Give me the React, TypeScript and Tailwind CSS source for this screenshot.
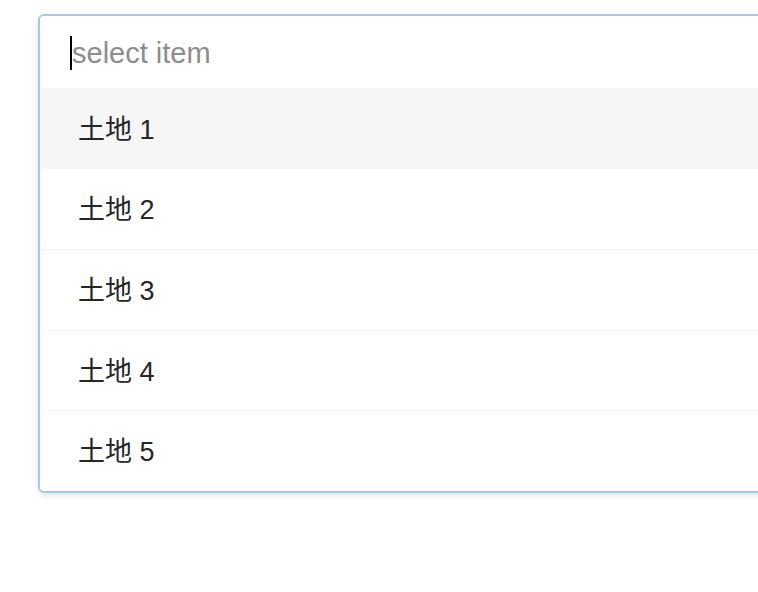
const items = ["土地 1", "土地 2", "土地 3", "土地 4", "土地 5"];

export default function App() {
  return (
    <div
      className="w-[758px] h-[592px] overflow-hidden bg-white pt-[14px] pl-[38px]"
      style={{ fontFamily: '"Liberation Sans", "Noto Sans CJK SC", sans-serif' }}
    >
      <div className="w-[760px] rounded-[6px] border-2 border-[#a5c9dc] bg-white shadow-[0_2px_6px_rgba(0,0,0,0.12)] overflow-hidden">
        <div className="h-[72px] flex items-center pl-[30px] pt-[2px]">
          <span className="w-[2px] h-[34px] bg-black" />
          <span className="text-[29px] text-[#8c8c8c] leading-none">select item</span>
        </div>
        {items.map((item, i) => (
          <div
            key={item}
            className={`h-[80.5px] flex items-center pl-[38px] pt-[3px] text-[27px] text-[#262626] ${
              i === 0 ? "bg-[#f6f6f6]" : i === 1 ? "" : "border-t border-[#f4f4f4]"
            }`}
          >
            {item}
          </div>
        ))}
      </div>
    </div>
  );
}
